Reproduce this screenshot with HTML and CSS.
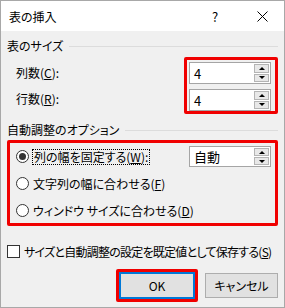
FILE: index.html
```html
<!DOCTYPE html>
<html lang="ja">
<head>
    <meta charset="UTF-8">
    <title>表の挿入</title>
    <link rel="stylesheet" href="styles.css">
</head>
<body>
    <div class="dialog">
        <div class="titlebar">
            <span class="title">表の挿入</span>
            <span class="help">?</span>
            <span class="close">
                <svg width="11" height="11" viewBox="0 0 11 11"><path d="M0.5 0.5 L10.5 10.5 M10.5 0.5 L0.5 10.5" stroke="#000" stroke-width="1" fill="none"/></svg>
            </span>
        </div>
        <div class="content">
            <div class="group-head"><span>表のサイズ</span></div>
            <div class="size-row">
                <div class="size-labels">
                    <div class="label">列数(<u>C</u>):</div>
                    <div class="label">行数(<u>R</u>):</div>
                </div>
                <div class="highlight size-box">
                    <div class="spin">
                        <span class="spin-value">4</span>
                        <span class="spin-btns"><span class="arrow up"></span><span class="arrow down"></span></span>
                    </div>
                    <div class="spin">
                        <span class="spin-value">4</span>
                        <span class="spin-btns"><span class="arrow up"></span><span class="arrow down"></span></span>
                    </div>
                </div>
            </div>
            <div class="group-head second"><span>自動調整のオプション</span></div>
            <div class="highlight options">
                <div class="option">
                    <span class="radio checked"></span>
                    <span class="focus">列の幅を固定する(<u>W</u>):</span>
                    <div class="spin combo">
                        <span class="spin-value">自動</span>
                        <span class="spin-btns"><span class="arrow up"></span><span class="arrow down"></span></span>
                    </div>
                </div>
                <div class="option">
                    <span class="radio"></span>
                    <span class="opt-text">文字列の幅に合わせる(<u>F</u>)</span>
                </div>
                <div class="option">
                    <span class="radio"></span>
                    <span class="opt-text">ウィンドウ サイズに合わせる(<u>D</u>)</span>
                </div>
            </div>
            <div class="check">
                <span class="box"></span>
                <span class="check-text">サイズと自動調整の設定を既定値として保存する(<u>S</u>)</span>
            </div>
            <div class="buttons">
                <div class="highlight ring"><div class="btn default">OK</div></div>
                <div class="btn">キャンセル</div>
            </div>
        </div>
    </div>
</body>
</html>
```

FILE: styles.css
```css
body {
    margin: 0;
    font-family: "Noto Sans CJK JP", "Noto Sans", sans-serif;
    font-size: 12px;
    color: #000;
    font-feature-settings: "palt";
}
.dialog {
    width: 285px;
    height: 308px;
    box-sizing: border-box;
    border: 1px solid #a8a8a8;
    background-color: #f0f0f0;
    display: flex;
    flex-direction: column;
}
.titlebar {
    height: 30px;
    background-color: #fff;
    display: flex;
    align-items: center;
    padding-left: 8px;
}
.title {
    flex: 1;
}
.help {
    width: 14px;
    font-size: 13px;
    margin-right: 31px;
}
.close {
    width: 11px;
    height: 11px;
    margin-right: 16px;
    display: flex;
}
.content {
    flex: 1;
    padding: 7px 6px 0 6px;
    display: flex;
    flex-direction: column;
}
.group-head {
    height: 16px;
    line-height: 16px;
    display: flex;
    align-items: center;
}
.group-head.second {
    margin-top: 8px;
}
.group-head::after {
    content: "";
    flex: 1;
    height: 1px;
    background-color: #dcdcdc;
    margin-left: 6px;
}
.highlight {
    border: 3px solid #f00000;
    border-radius: 2px;
}
.size-row {
    display: flex;
    margin-top: 3px;
}
.size-labels {
    flex: 1;
    padding-left: 9px;
    padding-top: 5px;
}
.label {
    height: 26px;
    line-height: 22px;
}
.size-box {
    width: 88px;
    padding: 2px 0 0 0;
    display: flex;
    flex-direction: column;
    gap: 5px;
}
.spin {
    width: 82px;
    height: 22px;
    box-sizing: border-box;
    margin-left: 2px;
    border: 1px solid #a5a5a5;
    background-color: #fff;
    display: flex;
    align-items: center;
    padding: 1px;
}
.spin-value {
    flex: 1;
    padding-left: 3px;
    font-size: 13px;
}
.spin-btns {
    width: 15px;
    height: 100%;
    display: flex;
    flex-direction: column;
    gap: 1px;
}
.arrow {
    flex: 1;
    box-sizing: border-box;
    border: 1px solid #b4b4b4;
    background-color: #e8e8e8;
    display: flex;
    align-items: center;
    justify-content: center;
}
.arrow::before {
    content: "";
    border-left: 3px solid transparent;
    border-right: 3px solid transparent;
}
.arrow.up::before {
    border-bottom: 3px solid #000;
}
.arrow.down::before {
    border-top: 3px solid #000;
}
.options {
    margin-top: 2px;
    height: 86px;
    box-sizing: border-box;
    padding: 2px 0 0 6px;
    display: flex;
    flex-direction: column;
    gap: 4px;
}
.option {
    height: 23px;
    display: flex;
    align-items: center;
}
.radio {
    width: 13px;
    height: 13px;
    box-sizing: border-box;
    border: 1px solid #333;
    border-radius: 50%;
    background-color: #fff;
    display: flex;
    align-items: center;
    justify-content: center;
}
.radio.checked::before {
    content: "";
    width: 7px;
    height: 7px;
    border-radius: 50%;
    background-color: #333;
}
.focus {
    margin-left: 3px;
    border: 1px dotted #000;
    padding: 0 1px;
    line-height: 14px;
}
.opt-text {
    margin-left: 4px;
}
.combo {
    margin-left: auto;
    margin-right: 4px;
    height: 21px;
}
.check {
    margin-top: 19px;
    display: flex;
    align-items: center;
    height: 13px;
}
.box {
    width: 13px;
    height: 13px;
    flex-shrink: 0;
    box-sizing: border-box;
    border: 1px solid #333;
    background-color: #fff;
    margin-right: 4px;
}
.check-text {
    white-space: nowrap;
    letter-spacing: -0.75px;
}
.buttons {
    margin-top: 11px;
    display: flex;
    justify-content: flex-end;
    align-items: center;
    gap: 7px;
}
.ring {
    display: flex;
}
.btn {
    width: 73px;
    height: 25px;
    box-sizing: border-box;
    border: 1px solid #adadad;
    background-color: #e1e1e1;
    display: flex;
    align-items: center;
    justify-content: center;
}
.btn.default {
    width: 76px;
    height: 27px;
    border: 2px solid #0078d7;
}
```
